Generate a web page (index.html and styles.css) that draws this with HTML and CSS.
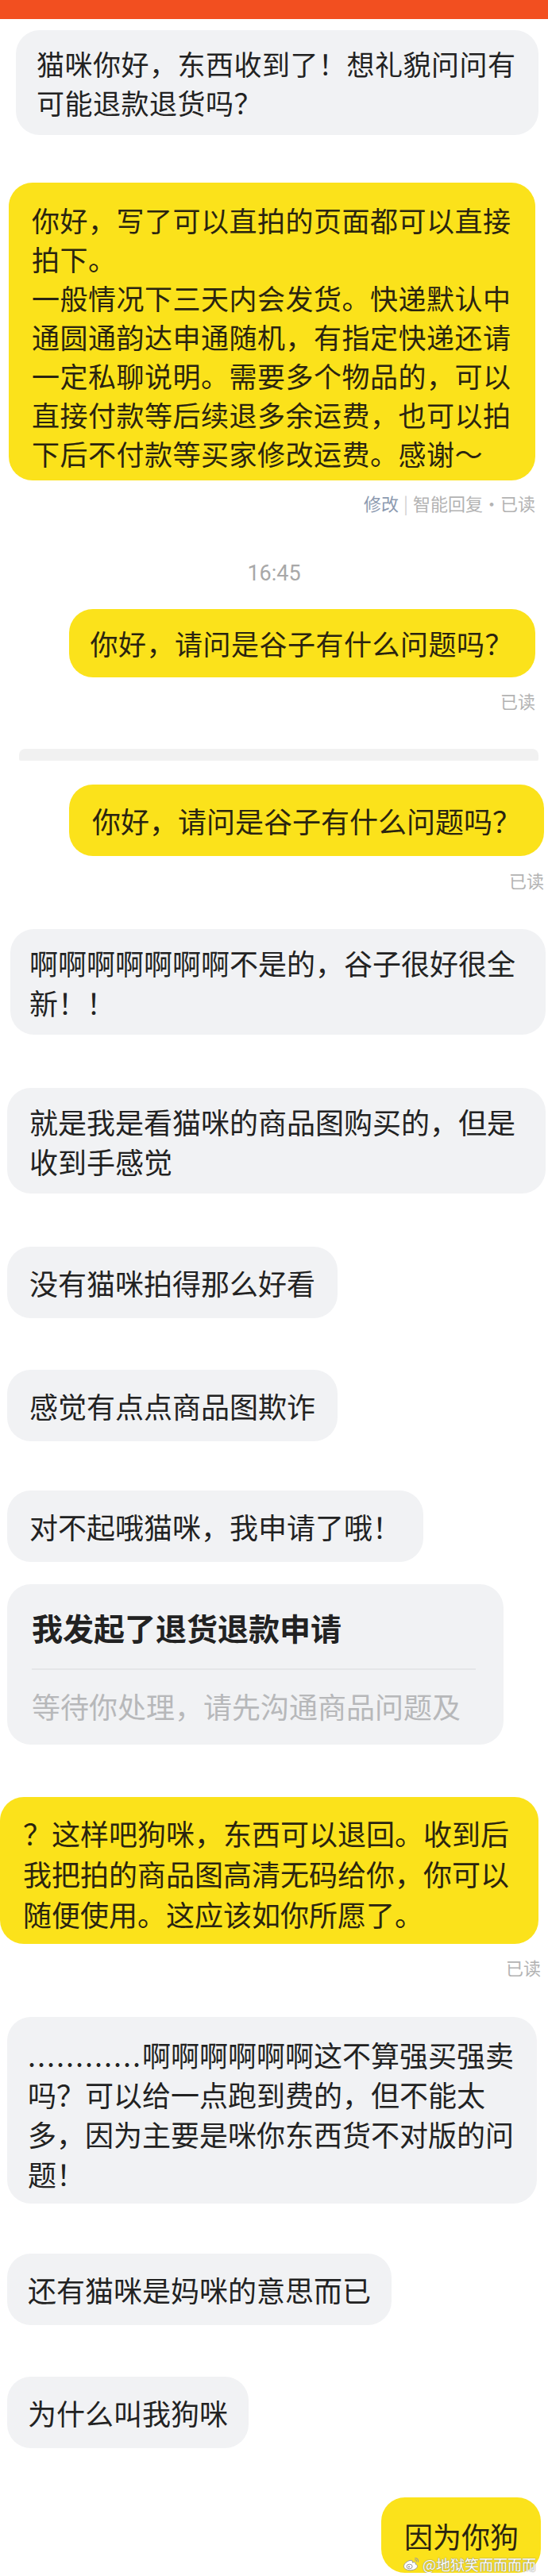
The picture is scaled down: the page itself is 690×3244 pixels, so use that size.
FILE: index.html
```html
<!DOCTYPE html>
<html lang="zh-CN">
<head>
  <meta charset="UTF-8">
  <meta name="viewport" content="width=device-width, initial-scale=1">
  <title>聊天记录</title>
  <link rel="stylesheet" href="styles.css">
</head>
<body>

<div class="topbar"></div>

<div class="chat">
  <div class="bubble them sm full b1">猫咪你好，东西收到了！想礼貌问问有<br>可能退款退货吗？</div>

  <div class="bubble me sm full b2">你好，写了可以直拍的页面都可以直接<br>拍下。<br>一般情况下三天内会发货。快递默认中<br>通圆通韵达申通随机，有指定快递还请<br>一定私聊说明。需要多个物品的，可以<br>直接付款等后续退多余运费，也可以拍<br>下后不付款等买家修改运费。感谢～</div>

  <div class="meta m-meta"><span class="edit">修改</span><span class="sep">|</span>智能回复·已读</div>

  <div class="time">16:45</div>

  <div class="bubble me sm b3">你好，请问是谷子有什么问题吗？</div>
  <div class="meta m-read1">已读</div>

  <div class="seam"></div>

  <div class="bubble me b4">你好，请问是谷子有什么问题吗？</div>
  <div class="meta m-read2">已读</div>

  <div class="bubble them full b5">啊啊啊啊啊啊啊不是的，谷子很好很全<br>新！！</div>

  <div class="bubble them full b6">就是我是看猫咪的商品图购买的，但是<br>收到手感觉</div>

  <div class="bubble them b7">没有猫咪拍得那么好看</div>

  <div class="bubble them b8">感觉有点点商品图欺诈</div>

  <div class="bubble them b9">对不起哦猫咪，我申请了哦！</div>

  <div class="card">
    <div class="card-title">我发起了退货退款申请</div>
    <div class="card-line"></div>
    <div class="card-sub">等待你处理，请先沟通商品问题及</div>
  </div>

  <div class="bubble me full b10">？这样吧狗咪，东西可以退回。收到后<br>我把拍的商品图高清无码给你，你可以<br>随便使用。这应该如你所愿了。</div>
  <div class="meta m-read3">已读</div>

  <div class="bubble them full b11"><span class="dots">............</span>啊啊啊啊啊啊这不算强买强卖<br>吗？可以给一点跑到费的，但不能太<br>多，因为主要是咪你东西货不对版的问<br>题！</div>

  <div class="bubble them b12">还有猫咪是妈咪的意思而已</div>

  <div class="bubble them b13">为什么叫我狗咪</div>

  <div class="bubble me b14">因为你狗
    <div class="watermark">
      <svg class="wb-logo" width="22" height="18" viewBox="0 0 22 18">
        <path d="M9 4.5c-3.5 0.8-7.5 4.2-7.5 7.3 0 3 3.6 5 8.2 5 5.3 0 8.8-2.6 8.8-5.2 0-1.6-1.4-2.3-2.5-2.6 0.6-1.4 0.2-2.7-1.7-2.4-1 0.2-1.9 0.6-1.9 0.6 0.4-1.6-0.4-3.6-3.4-2.7z" fill="#fff" stroke="#9a9a9a" stroke-width="1"/>
        <ellipse cx="8.6" cy="12" rx="3.6" ry="2.8" fill="none" stroke="#9a9a9a" stroke-width="1"/>
        <circle cx="8" cy="12.3" r="1.1" fill="#9a9a9a"/>
        <path d="M15.5 1.5c2.6-0.3 4.6 1.8 4 4.6M15.7 3.6c1.2-0.1 2 0.9 1.8 2" fill="none" stroke="#9a9a9a" stroke-width="1.1" stroke-linecap="round"/>
      </svg>
      <span>@地狱笑而而而而</span>
    </div>
  </div>
</div>

</body>
</html>
```

FILE: styles.css
```css
body {
  margin: 0;
  background: #fff;
  font-family: "Noto Sans CJK SC", "Noto Sans", sans-serif;
  color: #222;
}
.topbar {
  height: 24px;
  background: #f24f20;
}
.chat {
  display: flex;
  flex-direction: column;
}
.bubble {
  font-size: 36px;
  line-height: 50px;
  padding: 20px 26px;
  border-radius: 30px;
  white-space: nowrap;
}
.bubble.sm {
  font-size: 35px;
  line-height: 49px;
  letter-spacing: 0.5px;
}
.them {
  align-self: flex-start;
  background: #f1f2f4;
  margin-left: 9px;
}
.me {
  align-self: flex-end;
  background: #fbe21b;
  color: #2a2410;
  margin-right: 16px;
}
.full {
  align-self: stretch;
}
.meta {
  align-self: flex-end;
  font-size: 22px;
  line-height: 30px;
  color: #b3b3b3;
  margin-right: 16px;
}
.meta .edit {
  color: #8c9ab0;
}
.meta .sep {
  color: #d2d2d2;
  margin: 0 6px;
}
.time {
  align-self: center;
  font-family: "Roboto", "Noto Sans", sans-serif;
  font-size: 27px;
  line-height: 30px;
  color: #a8a8a8;
  margin-top: 59px;
}
.seam {
  height: 15px;
  margin: 46px 12px 0 24px;
  background: #f1f1f1;
  border-radius: 8px 8px 2px 2px;
}

/* vertical rhythm, per message */
.b1 { margin: 14px 12px 0 20px; padding: 17px 26px; }
.b2 { margin: 60px 16px 0 11px; padding: 22px 29px 10px; }
.m-meta { margin-top: 13px; }
.b3 { margin-top: 30px; padding: 18px 28px 19px 26px; }
.m-read1 { margin-top: 14px; }
.b4 { margin-top: 30px; margin-right: 5px; padding: 20px 29px; }
.m-read2 { margin-top: 15px; margin-right: 5px; }
.b5 { margin: 47px 3px 0 13px; padding: 17px 24px 16px; }
.b6 { margin: 67px 3px 0 9px; padding: 17px 28px 16px; }
.b7 { margin-top: 67px; padding: 20px 28px; }
.b8 { margin-top: 65px; padding: 20px 28px; }
.b9 { margin-top: 62px; padding: 20px 28px; }
.b10 { margin: 66px 12px 0 0; padding: 20px 29px 12px; line-height: 51px; }
.m-read3 { margin-top: 14px; margin-right: 9px; }
.b11 { margin: 48px 14px 0 9px; padding: 22px 26px 13px; }
.b12 { margin-top: 63px; }
.b13 { margin-top: 65px; }
.b14 {
  position: relative;
  margin-top: 62px;
  margin-right: 9px;
  padding: 23px 28px 22px 29px;
}
.dots {
  letter-spacing: 2px;
}

.card {
  align-self: flex-start;
  width: 625px;
  box-sizing: border-box;
  margin: 28px 0 0 9px;
  padding: 28px 35px 24px 31px;
  background: #f1f2f4;
  border-radius: 30px;
}
.card-title {
  font-size: 39px;
  line-height: 52px;
  font-weight: bold;
  color: #222;
}
.card-line {
  height: 2px;
  background: #e5e6e8;
  margin-top: 26px;
}
.card-sub {
  font-size: 36px;
  line-height: 50px;
  color: #b7b8ba;
  margin-top: 20px;
}

.watermark {
  position: absolute;
  left: 27px;
  bottom: 0;
  display: flex;
  align-items: center;
  gap: 3px;
  font-size: 18px;
  line-height: 22px;
  color: #fff;
  letter-spacing: 0;
  text-shadow: 0 0 1px #777, 0 0 2px #999;
}
```
